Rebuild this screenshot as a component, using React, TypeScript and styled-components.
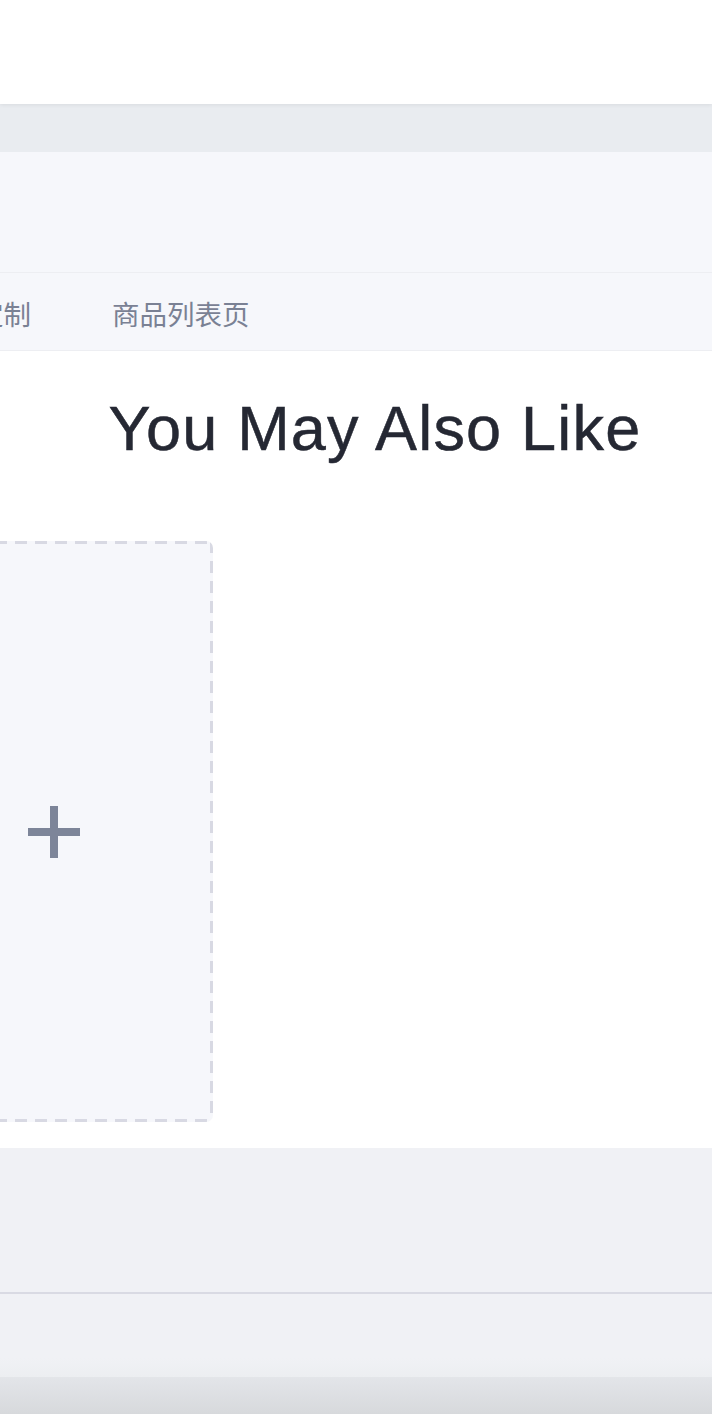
import React from "react";
import styled, { createGlobalStyle } from "styled-components";

const GlobalStyle = createGlobalStyle`
  html, body {
    margin: 0;
    padding: 0;
    background: #ffffff;
    overflow: hidden;
  }
  body {
    font-family: "Liberation Sans", "Noto Sans CJK SC", Arial, sans-serif;
  }
`;

const tabs = ["店铺定制", "商品列表页"];

const dashColor = "#d8d9e3";

const App: React.FC = () => {
  return (
    <>
      <GlobalStyle />
      <Page>
        <Header />
        <Band />
        <Panel />
        <TabBar>
          <Shift>
            <TabList>
              {tabs.map((t) => (
                <Tab key={t}>{t}</Tab>
              ))}
            </TabList>
          </Shift>
        </TabBar>
        <Content>
          <Shift>
            <Title>You May Also Like</Title>
            <AddCard>
              <PlusIcon />
            </AddCard>
          </Shift>
        </Content>
        <Footer />
        <FooterRest />
        <BottomBar />
      </Page>
    </>
  );
};

const Page = styled.div`
  width: 712px;
  height: 1414px;
  display: flex;
  flex-direction: column;
  overflow: hidden;
`;

const Header = styled.div`
  flex: 0 0 104px;
  background: #ffffff;
  box-shadow: 0 1px 4px rgba(0, 0, 0, 0.07);
  position: relative;
  z-index: 1;
`;

const Band = styled.div`
  flex: 0 0 48px;
  background: #e9ecf0;
`;

const Panel = styled.div`
  flex: 0 0 120px;
  background: #f6f7fb;
  border-bottom: 1px solid #edeef2;
`;

const TabBar = styled.div`
  flex: 0 0 77px;
  display: flex;
  align-items: center;
  background: #f6f7fb;
  border-bottom: 1px solid #edeef2;
`;

// the view is scrolled sideways: the content column starts left of the window
const Shift = styled.div`
  width: 960px;
  margin-left: -105px;
  flex-shrink: 0;
`;

const TabList = styled.div`
  display: flex;
  align-items: center;
  gap: 81px;
  padding-left: 26px;
`;

const Tab = styled.div`
  font-size: 27.5px;
  line-height: 1;
  padding-top: 4px;
  color: #7a8194;
  font-family: "Noto Sans CJK SC", sans-serif;
`;

const Content = styled.div`
  flex: 0 0 797px;
  display: flex;
  background: #ffffff;
`;

const Title = styled.h2`
  margin: 46px 0 82px;
  font-size: 63px;
  line-height: 62px;
  font-weight: 400;
  letter-spacing: 1.2px;
  text-align: center;
  color: #252833;
  -webkit-text-stroke: 0.5px #252833;
`;

const AddCard = styled.div`
  width: 318px;
  height: 581px;
  box-sizing: border-box;
  display: flex;
  align-items: center;
  justify-content: center;
  border-radius: 7px;
  background:
    repeating-linear-gradient(to right, ${dashColor} 0 12px, transparent 12px 20px) top / 100% 3px no-repeat,
    repeating-linear-gradient(to right, ${dashColor} 0 12px, transparent 12px 20px) bottom / 100% 3px no-repeat,
    repeating-linear-gradient(to bottom, ${dashColor} 0 12px, transparent 12px 20px) left / 3px 100% no-repeat,
    repeating-linear-gradient(to bottom, ${dashColor} 0 12px, transparent 12px 20px) right / 3px 100% no-repeat,
    #f6f7fb;
`;

const PlusIcon = styled.div`
  width: 52px;
  height: 52px;
  background:
    linear-gradient(#7d8599, #7d8599) center / 8px 52px no-repeat,
    linear-gradient(#7d8599, #7d8599) center / 52px 8px no-repeat;
`;

const Footer = styled.div`
  flex: 0 0 144px;
  background: #f0f1f5;
  border-bottom: 2px solid #d9dae3;
  box-sizing: content-box;
`;

const FooterRest = styled.div`
  flex: 0 0 83px;
  background: linear-gradient(
    to bottom,
    #f0f1f5 0px,
    #f0f1f5 64px,
    #eceef1 83px
  );
`;

const BottomBar = styled.div`
  flex: 1 0 37px;
  background: linear-gradient(to bottom, #e3e5e9, #d7d9dc);
`;

export default App;
